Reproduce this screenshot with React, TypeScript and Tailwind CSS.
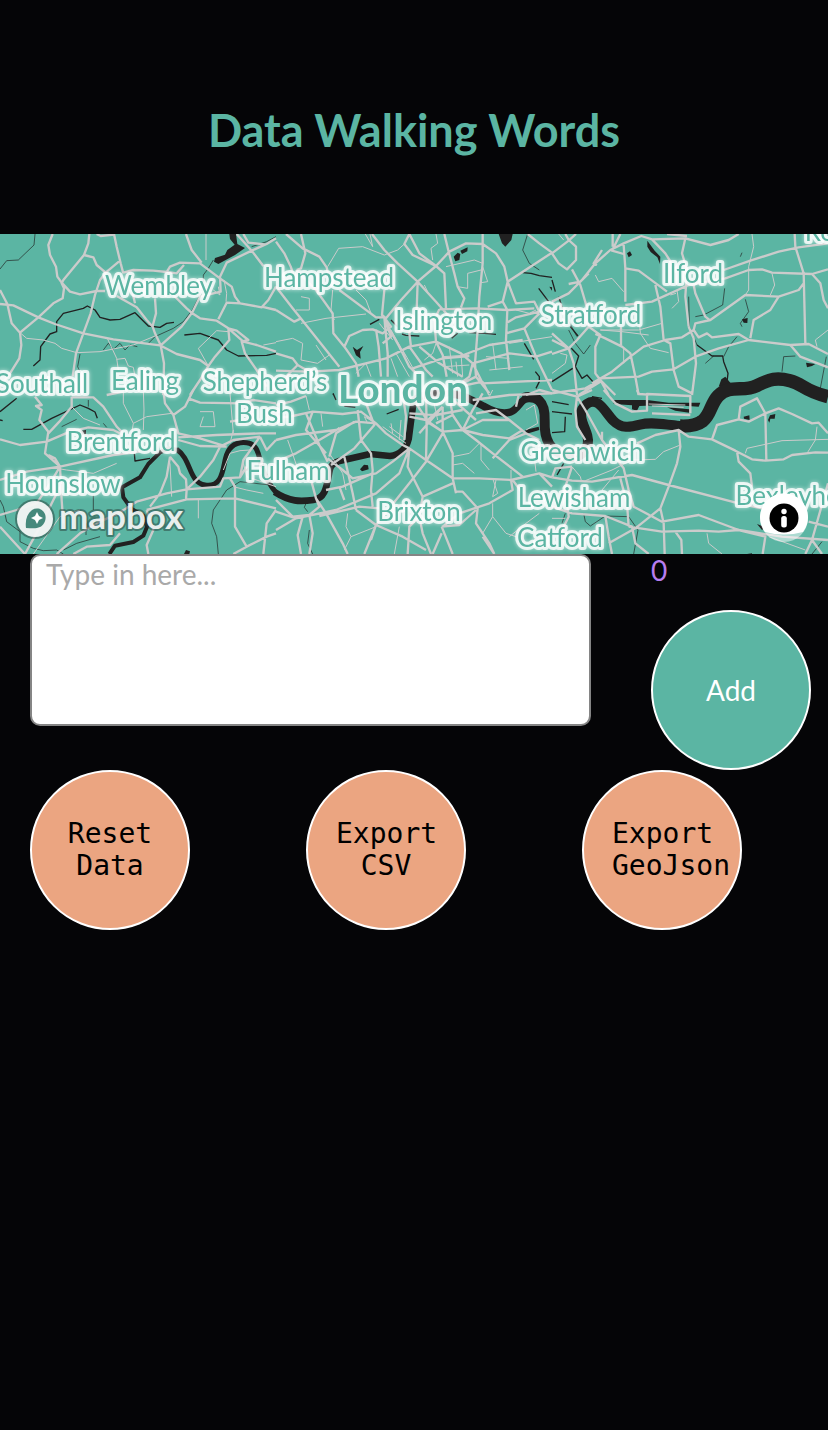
import { useState } from 'react'

// Map drawing is split in tiles, each with its own local coordinates
type Tile = { x: number; y: number; major: string; minor: string; water: string; stream: string; lakes: string }

const tiles: Tile[] = [
  {
    x: 0,
    y: -12,
    major:
      'M0 180 22 222 35 280 60 308 64 345 58 385 30 430 0 470M0 222 40 226 115 262 165 282 250 310 340 328 480 346 530 372 600 390 625 408M268 12 265 40 252 75 190 150 185 160 192 175 188 205 160 220 115 262 60 308M158 12 145 45 150 75 168 110 172 140 185 158 210 185 240 193 290 183 315 183M252 75 280 82 290 105 317 128M342 12 350 50 362 100 370 130M290 12 302 18 342 14M360 92 317 128 300 150 285 195 272 250 250 310 228 370 218 440M370 128 400 120 460 122 500 126 510 110 540 98 600 100 640 130 660 145M500 126 530 130 552 105M558 12 575 60 605 98M828 25 800 42 755 62 680 98 660 140 662 185 600 200 577 247 545 290 482 346M710 12 755 62 790 108M730 12 745 38 800 44M660 145 695 170 705 200 720 220 680 218 655 268M720 220 785 232 805 210 828 170M785 230 828 240M520 195 560 235 577 250 600 265 650 272 685 295 730 335 770 345 828 365M350 198 410 232 440 270 458 290 465 310 482 346M465 205 468 250 458 288M398 190 405 220M482 346 492 400 490 495M685 295 688 330 645 380 625 408 600 450 570 495M685 295 710 302 745 330 725 335 735 370 770 420 800 470M320 495 370 485',
    minor:
      'M60 308 80 325 130 330 165 340 185 355 230 368 300 365 400 345 465 318M322 325 350 385 355 420M350 388 375 385 385 408 400 412 405 440M618 12 618 90M625 408 595 355 650 302 685 305M672 150 680 190 678 215M790 345 828 338M770 425 800 430M640 180 660 195 655 170',
    water:
      'M100 408 120 390 122 350 150 312 170 305 170 275 190 250 250 235 262 228 285 240 300 262 330 270 360 268 405 248 445 288 480 292 500 280 522 277M553 315 600 310 655 330 680 360 715 378 800 376 828 370',
    stream:
      'M105 12 102 45 55 90 20 92 0 117M240 372 233 410 240 425M310 360 325 340 340 358 360 340 375 360 390 345 412 350M445 340 465 320 520 295 550 275 577 240 600 195 M610 160 610 135 625 115 640 90M755 50 800 35 828 20',
    lakes: 'M688 12 708 12 712 42 735 54 705 75 655 102 642 95 645 84 675 74 682 60 704 44 690 27z',
  },
  {
    x: 828,
    y: -12,
    major:
      'M0 35 25 70 45 112 60 160M30 12 80 55 130 80 152 112 160 150M75 12 88 70 75 115 62 120M288 12 325 60 365 100 425 155 480 215 520 260M400 12 385 42 410 75 480 108 505 130 510 235M400 12 430 70 480 108 425 155 375 210 330 265 318 255 325 180M505 12 518 65 535 130 545 170 565 205 555 232M480 108 520 65 570 40 620 42 660 70 685 110 695 155 680 215 694 240 690 330 700 420M620 12 620 100 610 200 605 300 597 400 600 440M695 155 828 68M828 68 790 40 755 12M695 155 720 220 775 215 790 245 720 262 690 280M490 238 600 235 694 240 775 235M425 155 422 240M60 120 120 180 170 250 172 310 205 350 240 400 248 440M190 180 300 262 325 262M0 170 50 235 110 310 190 410M0 240 55 275 75 265M205 350 220 318 260 300 290 298 320 310 345 290 325 262M300 298 308 350 315 440M325 262 335 370 335 440M325 270 370 350 400 410 430 440M0 422 100 425 190 420 330 385 400 350 480 335 555 370 590 400 620 460 828 450M0 370 50 385 65 405 100 425M400 350 450 420 470 440M480 335 500 375 512 440M430 350 490 400 560 440M555 378 640 345 740 330M590 400 700 370 780 380 828 365M480 335 475 270 490 238M690 310 745 295 790 250M745 295 780 380 828 480M590 400 580 440 560 455M325 262 345 320 320 340M500 480 620 455M620 455 640 495M65 405 30 440M635 230 680 215M405 350 400 310 422 250M600 440 640 490M410 415 500 385 580 378M750 495 790 480 828 490M540 470 600 440',
    minor:
      'M155 110 188 55 260 50 325 75 365 60 385 42M282 12 290 50M268 12 290 50M510 110 595 90 620 100M620 110 635 155 615 158M545 170 575 175 575 130 615 120M75 280 150 265 270 252M80 340 75 390 125 400 160 375M170 180 165 240 175 270M0 335 50 325 80 340M75 200 100 205 100 240 60 240M240 180 270 210 285 250M480 12 485 40 465 55 470 90M650 340 660 420M360 370 400 440M380 360 420 430M500 380 580 375M520 350 530 430M555 370 560 440M640 420 740 410M700 340 828 320M345 300 390 380M310 280 350 330M345 385 365 440M240 430 270 400 285 440M425 155 455 185 445 165M720 240 760 250 780 240M500 410 580 405M540 395 545 440M445 390 470 370 480 340M630 380 700 385M120 345 150 390',
    water:
      'M740 128 765 130 790 137 828 142M788 175 818 215M282 283 310 268M345 270 365 290M378 312 390 316 430 318M527 325 545 310M580 308 625 310 660 313M745 340 773 388M778 425 790 440 790 455 780 475M172 490 172 495',
    stream: 'M755 12 740 60 760 100 790 120',
    lakes:
      'M533 80 545 68 553 72 550 90 538 94zM553 62 575 52 574 64 558 72zM230 350 243 360 262 348 252 366 254 386 240 376zM668 12 710 12 706 30 688 50 678 40zM820 170 828 172 828 182z',
  },
  {
    x: 1656,
    y: -12,
    major:
      'M0 215 50 190 90 150 130 100 175 60 215 40 268 18 300 28 400 25 475 45 530 30 560 12M0 70 20 100 45 118 72 90 72 50 50 30 40 12M0 70 50 32 72 12M60 118 85 165 110 250 110 290 75 330 50 355 0 372M50 162 85 155 110 130M182 12 182 50M205 12 180 62 215 72M215 45 220 115 220 215M220 115 260 122 345 185M300 28 340 70 365 110M400 25 390 70 405 120 400 200 410 290M405 18 345 12M220 225 300 215 410 165 520 145 590 120 630 118 660 128 780 132 828 118M515 120 595 92 680 65 740 52 828 40M728 12 730 50 755 130 760 340M780 132 805 160 815 210 828 235M755 160 740 180 680 200 580 195 475 270 430 280 425 300M425 165 430 190 460 260 475 272M680 200 655 240 605 270 595 325M130 312 160 325 210 350 235 370 250 440 260 495M110 290 145 315 130 350 130 430 145 450M310 165 325 230 335 330 355 340 365 420 380 470 420 490M120 460 180 425 235 380 275 350 340 330 390 322 425 300 440 322 465 310 480 322 560 312 590 330 715 345 770 342 828 372M410 290 425 325 432 400 420 495M145 445 260 440 300 425 365 418 430 380 500 355 590 330M715 345 745 380 828 412M50 355 65 400 75 495M0 330 50 355M0 490 100 475 145 450 190 495M207 290 207 345M150 60 125 100 135 105M80 495 145 455M0 310 50 355M145 450 170 495',
    minor:
      'M130 135 140 155 180 145 215 185M600 12 605 50 590 110 590 180 580 195M660 130 668 165 655 195M145 300 260 300 330 280M260 235 265 310 295 355 350 368M375 180 380 215 360 235M828 300 790 330 795 350M215 355 215 400M0 430 40 400 45 375 25 370M355 195 372 190M145 300 210 305 290 315M20 12 35 30',
    water: 'M0 150 10 185M20 200 35 245M55 290 78 318M58 355 80 378 70 410 90 445 105 435 125 458M0 455 62 415M435 345 480 378 512 378 515 395 528 430 525 455',
    stream:
      'M410 200 412 290 435 345M518 175 512 225 455 255 430 260M580 208 590 245 565 280 570 290M690 425 695 380 730 378M460 400 485 378M515 380 530 350 555 320M823 380 805 475M50 300 70 340 95 372 115 345M570 68 565 80M35 245 75 320',
    lakes:
      'M225 70 234 64 240 75 230 82zM286 32 308 62 325 80 324 102 316 82 296 66 286 50zM570 268 587 264 586 279 575 278zM762 398 790 402 780 408 765 412zM508 448 520 440 538 462 500 470z',
  },
  {
    x: 0,
    y: 468,
    major:
      'M0 148 60 165 140 155 210 125 265 112 340 120 370 135M0 270 80 245 180 230 340 195 420 185M105 20 125 45 108 48 125 60 118 90 145 125 135 190 180 230 150 280 110 340 50 360 0 375M215 20 215 50 178 95 145 130M215 22 280 22 310 50 350 110 370 130M490 0 495 40 520 75 535 130 600 145 680 170M535 150 600 168 680 170M580 0 555 50 520 75M565 25 600 38 720 40 760 30 828 40M535 142 650 135 780 130 828 130M660 170 700 150 780 140M660 170 640 210 600 260 560 298M510 200 500 260 480 310 450 350M510 200 535 230 540 250 558 268 560 298 500 310 410 335 355 370 300 395 240 430 170 492M440 360 560 328 705 325 828 355M560 298 558 328M560 298 660 290 670 265 720 262 730 210 780 140M705 325 705 410 740 470 700 492M740 470 800 440 828 430M790 492 800 400 828 360M0 410 50 465 75 492 120 410 180 290M180 230 185 330 190 400M220 492 260 470 330 465 360 430M440 360 460 420 440 465 445 492M690 265 705 290 705 325M720 262 740 230M690 95 720 90M780 140 800 180 828 150M0 15 20 10M145 195 165 205 180 230',
    minor:
      'M370 0 370 40 400 100 395 130M430 0 432 60 430 120M400 100 440 80 515 70M600 65 640 65 645 110 600 110 610 80M510 220 515 320M595 330 595 385M170 235 200 240 280 250 350 220M690 10 700 130M670 240 690 190 720 182 750 180M700 290 740 300 790 310M215 50 250 85 300 105M730 220 740 260 828 290M100 492 180 380 240 360M690 160 700 120',
    water: 'M70 118 95 118 155 85 240 45 265 55 285 66 292 85M0 65 50 25M0 90 8 92M403 190 405 213 450 205',
    stream:
      'M185 110 230 88M0 330 10 350 20 395 60 425 60 455 100 475 130 482 170 480 190 492M655 492 650 440 635 400 640 360 680 300 720 275 810 285M280 315 280 360M310 100 320 112M265 50 265 30M190 480 230 460 300 440M258 400 258 435',
    lakes: 'M243 122 258 120 258 133 248 136zM552 492 558 480 570 484 568 492zM736 232 744 230 744 242 738 242z',
  },
  {
    x: 828,
    y: 468,
    major:
      'M0 85 50 78 110 65 200 72 255 65 300 100 330 130 380 165 400 175M0 150 60 135 180 120 240 95 300 100M0 45 45 35 90 18M90 70 130 165 155 215M0 215 60 190 130 150 190 115M110 65 90 120 150 190M165 225 235 175 295 105 255 0M155 205 200 240 230 265 300 250 350 215 400 175M205 200 230 310 240 360M245 60 255 150 285 190 290 240 285 300 290 350M400 175 370 250 300 310 180 360 60 385 0 420M190 290 205 330M150 300 200 290 290 250M0 330 50 380 100 375 130 350 120 325M0 365 60 385 80 380 65 435 75 492M120 325 150 370 200 460 215 492M100 250 120 325M100 375 110 430 100 492M400 175 395 230 440 320 430 380 400 410 395 492M400 175 450 210 530 265 610 265 705 270 790 250 828 262M500 130 450 215 400 280 300 405 265 492M400 80 450 90 500 125 530 190 530 265 540 310M450 0 452 120 450 210M440 320 530 280M380 10 390 80 385 150M400 70 480 75 560 60M500 50 500 125M560 120 620 90 700 90 750 130 790 150M500 125 560 120 600 150 650 190 740 260M620 10 590 60 560 120M530 75 560 120 620 135 700 145 740 120M650 205 700 150 750 130M520 20 530 75 480 100M705 270 710 300 640 340 550 370 500 410M540 305 560 305 605 355 600 400 640 460 655 492M497 410 530 492M497 410 550 405 600 360M497 430 470 492M300 405 380 440 450 480M240 360 300 405 285 450M130 378 250 350 310 355M430 380 440 430 465 492M790 250 828 290M710 270 740 310M590 30 700 15 828 10M720 50 728 15M480 45 520 20 600 90M655 492 620 440M455 90 500 50M460 100 500 125M235 95 180 130 160 200M430 130 500 50M420 40 460 100M700 90 660 60 600 70',
    minor:
      'M530 225 560 220 595 250M530 200 580 190 610 160 650 190M615 160 615 210 640 240M650 340 650 380 690 430 720 440M650 380 620 430M215 370 210 410 225 440 300 410M225 440 205 480M340 110 380 140M345 100 350 130M370 410 355 492M35 150 70 250M300 100 265 80 275 100M705 240 705 270M135 70 140 110M790 370 750 400 700 440M160 190 200 250 210 300M650 265 665 310 650 320 660 270M770 160 780 245M90 18 100 60M420 0 430 60M470 20 485 90M750 60 775 45 785 100 750 120M375 90 370 150M320 110 390 160M640 20 650 0',
    water: 'M332 72 368 58M172 12 180 30M205 48 238 52',
    stream: 'M90 340 85 352 95 365M100 420 95 460 110 492',
    lakes: 'M252 238 264 224 276 226 278 238 258 244zM748 120 788 110 790 120 750 132z',
  },
  {
    x: 1656,
    y: 468,
    major:
      'M0 262 60 272 120 275 240 255 350 285 560 340 630 355M150 125 150 150 215 235 230 300 245 350 330 395 440 375 560 420 690 440 828 450M255 160 310 135 380 120 410 140 480 148 495 105 560 88 590 95 640 70 680 55 720 72 780 100 800 98 828 130M380 120 385 170 375 220 350 290 325 355 335 400 338 492M480 148 550 182 600 208 640 212 695 208 720 195 790 187 828 188M560 88 565 50 615 25 640 70 643 210M555 185 560 215 595 250 600 290M325 355 250 415 170 460M230 410 330 425 440 422 500 425 560 420 640 440 632 492M370 425 388 450 390 492M0 350 60 370 160 378 240 410 250 460 290 492M205 265 225 340 230 410M60 230 40 290 50 380 20 440M160 378 170 440 180 492M75 20 70 60 75 110 100 150M155 0 190 40 240 65 285 62 285 12 415 18 415 70 M828 280 780 450 810 492M780 450 760 492M770 395 828 410M0 0 75 20 120 0M75 20 100 60 150 150M480 148 490 120M255 0 260 12 290 14M0 262 10 235 60 230M300 70 415 75',
    minor:
      'M100 272 180 240 240 210 310 208 335 185 385 165M465 430 470 460 510 492M580 190 585 175 690 152 828 148M795 110 790 150 765 190M150 300 200 240M650 440 760 480M0 385 40 385M60 230 85 260 88 272M290 42 400 45M300 48 395 52',
    water: 'M0 65 25 68 60 72M0 35 50 44M40 80 38 125 0 128M120 20 150 25M85 40 105 60M15 255 35 220',
    stream: 'M95 370 100 395 115 408 160 378 230 380 258 420 245 492M780 492 810 455M40 370 30 400',
    lakes:
      'M185 30 285 30 350 38 445 38 440 50 350 44 262 48 255 62 240 58 240 46 185 42zM345 52 412 58 412 68 370 62zM575 80 592 76 593 90 576 86zM648 90 654 76 670 72 668 86 655 86 652 98zM615 402 640 412 630 420zM585 492 600 490 600 492z',
  },
]

const labels = [
  { text: 'Wembley', x: 477, y: 184 },
  { text: 'Hampstead', x: 987, y: 160 },
  { text: 'Ilford', x: 2079, y: 148 },
  { text: 'Islington', x: 1331, y: 288 },
  { text: 'Stratford', x: 1773, y: 270 },
  { text: 'Southall', x: 126, y: 478 },
  { text: 'Ealing', x: 435, y: 468 },
  { text: 'Shepherd’s', x: 795, y: 472 },
  { text: 'Bush', x: 793, y: 566 },
  { text: 'Brentford', x: 363, y: 652 },
  { text: 'Fulham', x: 864, y: 738 },
  { text: 'Hounslow', x: 189, y: 776 },
  { text: 'Greenwich', x: 1746, y: 682 },
  { text: 'Lewisham', x: 1722, y: 820 },
  { text: 'Brixton', x: 1257, y: 860 },
  { text: 'Catford', x: 1680, y: 940 },
  { text: 'Bexleyheath', x: 2418, y: 812 },
  { text: 'Romford', x: 2562, y: 22 },
]

function LondonMap() {
  return (
    <svg
      role="img"
      aria-label="Map of London"
      viewBox="0 0 2484 960"
      preserveAspectRatio="xMidYMid slice"
      className="block w-full h-80 bg-[#5bb5a3]"
    >
      <g fill="none" stroke="#212121" strokeLinejoin="round">
        {tiles.map((t, i) => (
          <g key={i} transform={`translate(${t.x} ${t.y})`}>
            <path d={t.stream} strokeWidth="2" />
            <path d={t.water} strokeWidth="4" />
            <path d={t.lakes} fill="#212121" stroke="none" />
          </g>
        ))}

        {/* Thames, west to east */}
        <path
          strokeWidth="12"
          d="M328 960 345 935 400 924 430 905 441 878 430 845 395 825 370 790 366 760 420 730 445 690 480 655 505 643 535 648"
        />
        <path
          strokeWidth="15"
          d="M530 646C575 675 565 745 615 753S668 710 676 675 705 622 740 626 775 665 785 695 805 750 830 778"
        />
        <path
          strokeWidth="20"
          d="M824 774C870 804 900 803 940 798S980 750 990 705Q993 690 1015 682L1110 660 1170 666Q1215 660 1226 615L1240 508"
        />
        <path
          strokeWidth="22"
          d="M1240 508C1250 470 1370 470 1415 498L1450 516Q1500 545 1532 534C1560 524 1560 488 1600 490"
        />
        <path
          strokeWidth="30"
          d="M1568 492C1610 482 1636 500 1634 560S1650 650 1700 665 1770 635 1762 605 1725 535 1760 510 1815 535 1840 560 1890 580 1920 572 1990 570 2030 575 2100 570 2125 540"
        />
        <path
          strokeWidth="40"
          d="M2040 576C2140 580 2120 520 2155 485S2230 475 2270 455 2330 430 2370 440 2410 470 2484 488"
        />
      </g>

      <g fill="none" stroke="#cbcbcb" strokeLinejoin="round">
        {tiles.map((t, i) => (
          <g key={i} transform={`translate(${t.x} ${t.y})`}>
            <path d={t.minor} strokeWidth="3" />
            <path d={t.major} strokeWidth="7" />
          </g>
        ))}
      </g>

      {/* PLACE NAMES */}
      <g
        fill="#5bb5a3"
        stroke="#ffffff"
        strokeOpacity="0.8"
        strokeWidth="18"
        strokeLinejoin="round"
        paintOrder="stroke"
        textAnchor="middle"
        fontSize="78"
        className="font-['Lato',sans-serif] drop-shadow-[0_0_6px_rgba(255,255,255,0.7)]"
      >
        {labels.map((l) => (
          <text key={l.text} x={l.x} y={l.y}>
            {l.text}
          </text>
        ))}
        <text x="1209" y="508" fontSize="117" fontWeight="700">
          London
        </text>
      </g>
    </svg>
  )
}

function MapboxLogo() {
  return (
    <a href="https://www.mapbox.com/" aria-label="Mapbox" className="absolute left-3.5 bottom-3">
      <svg viewBox="0 0 176 46" className="block w-44 h-[46px]">
        <circle cx="21" cy="23" r="20" fill="#27413c" opacity="0.5" />
        <circle cx="21" cy="23" r="18" fill="#ffffff" opacity="0.9" />
        <path
          d="M12 32C11 24 13 18 18 14C23 11 29 13 31 18C33 23 30 29 26 31C22 33 17 32 12 32Z"
          fill="#46897c"
        />
        <path d="M23 16l2 4 4 2-4 2-2 4-2-4-4-2 4-2z" fill="#ffffff" />
        <text
          x="45"
          y="33"
          fontSize="35"
          fontWeight="700"
          fill="#ffffff"
          fillOpacity="0.9"
          stroke="#27413c"
          strokeOpacity="0.5"
          strokeWidth="4"
          strokeLinejoin="round"
          paintOrder="stroke"
          className="font-['Lato',sans-serif]"
        >
          mapbox
        </text>
      </svg>
    </a>
  )
}

const circle = 'size-40 shrink-0 rounded-full border-2 border-white text-[28px] leading-8'
const action = "px-7 bg-[#eba581] font-['DejaVu_Sans_Mono',monospace] text-black"

export default function App() {
  const [word, setWord] = useState('')
  const [words, setWords] = useState<string[]>([])

  function addWord() {
    if (!word.trim()) return
    setWords([...words, word.trim()])
    setWord('')
  }

  return (
    <main className="min-h-screen bg-[#050507] font-['Lato',sans-serif]">

      {/* HEADER */}
      <header className="pt-[106px] pb-20">
        <h1 className="text-center text-[45px] leading-[48px] font-bold text-[#5bb5a3]">
          Data Walking Words
        </h1>
      </header>

      {/* MAP */}
      <section className="relative overflow-hidden">
        <LondonMap />
        <MapboxLogo />
        <button type="button" aria-label="Toggle attribution" className="absolute right-5 bottom-3">
          <svg viewBox="0 0 48 50" className="block w-12 h-[50px]">
            <circle cx="24" cy="26" r="24" fill="#ffffff" opacity="0.5" />
            <path d="M5 40A24 24 0 1 1 43 40Q24 45 5 40Z" fill="#ffffff" />
            <circle cx="24" cy="26" r="14.5" />
            <circle cx="24" cy="19.5" r="2.7" fill="#ffffff" />
            <rect x="21.2" y="24" width="5.6" height="11.5" rx="2.5" fill="#ffffff" />
          </svg>
        </button>
      </section>

      {/* INPUT */}
      <section className="flex">
        <div className="w-3/4 px-[30px]">
          <textarea
            aria-label="Word"
            placeholder="Type in here..."
            value={word}
            onChange={(e) => setWord(e.target.value)}
            className="
              block w-full h-[172px] resize-none
              rounded-[10px] border-2 border-[#858585] bg-white
              px-3.5 py-0.5
              text-[28px] leading-8 text-black
              placeholder:text-[#a9a9a9]
            "
          />
        </div>
        <div className="w-1/4 pl-[30px]">
          <p className="h-14 text-[28px] leading-8 text-[#b77df0]">{words.length}</p>
          <button type="button" onClick={addWord} className={`${circle} bg-[#5bb5a3] text-white`}>
            Add
          </button>
        </div>
      </section>

      {/* ACTIONS */}
      <section className="grid grid-cols-3">
        <div className="pl-[30px]">
          <button type="button" onClick={() => setWords([])} className={`${circle} ${action}`}>
            Reset Data
          </button>
        </div>
        <div className="pl-[30px]">
          <button type="button" className={`${circle} ${action}`}>
            Export CSV
          </button>
        </div>
        <div className="pl-[30px]">
          <button type="button" className={`${circle} ${action}`}>
            Export GeoJson
          </button>
        </div>
      </section>

    </main>
  )
}
